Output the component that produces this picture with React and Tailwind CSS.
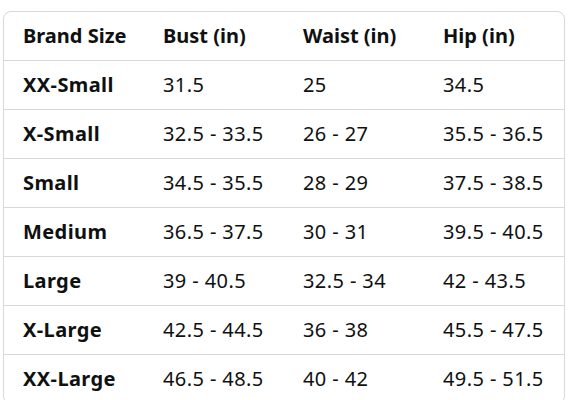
const headers = ["Brand Size", "Bust (in)", "Waist (in)", "Hip (in)"];

const rows = [
  ["XX-Small", "31.5", "25", "34.5"],
  ["X-Small", "32.5 - 33.5", "26 - 27", "35.5 - 36.5"],
  ["Small", "34.5 - 35.5", "28 - 29", "37.5 - 38.5"],
  ["Medium", "36.5 - 37.5", "30 - 31", "39.5 - 40.5"],
  ["Large", "39 - 40.5", "32.5 - 34", "42 - 43.5"],
  ["X-Large", "42.5 - 44.5", "36 - 38", "45.5 - 47.5"],
  ["XX-Large", "46.5 - 48.5", "40 - 42", "49.5 - 51.5"],
];

export default function App() {
  return (
    <div className="w-[579px] h-[400px] overflow-hidden bg-white pt-[11px] pl-[3px] font-['Noto_Sans',sans-serif] text-[#0f1111]">
      <div className="w-[562px] border border-[#d5d9d9] rounded-[8px] overflow-hidden">
        <div className="grid grid-cols-4 h-[48px] items-center">
          {headers.map((h) => (
            <div key={h} className="pl-[19px] text-[20px] font-bold">
              {h}
            </div>
          ))}
        </div>
        {rows.map((r) => (
          <div
            key={r[0]}
            className="grid grid-cols-4 h-[49px] items-center border-t border-[#d5d9d9]"
          >
            {r.map((c, i) => (
              <div
                key={i}
                className={`pl-[19px] text-[20px] tracking-[0.4px] ${i === 0 ? "font-bold" : ""}`}
              >
                {c}
              </div>
            ))}
          </div>
        ))}
      </div>
    </div>
  );
}
